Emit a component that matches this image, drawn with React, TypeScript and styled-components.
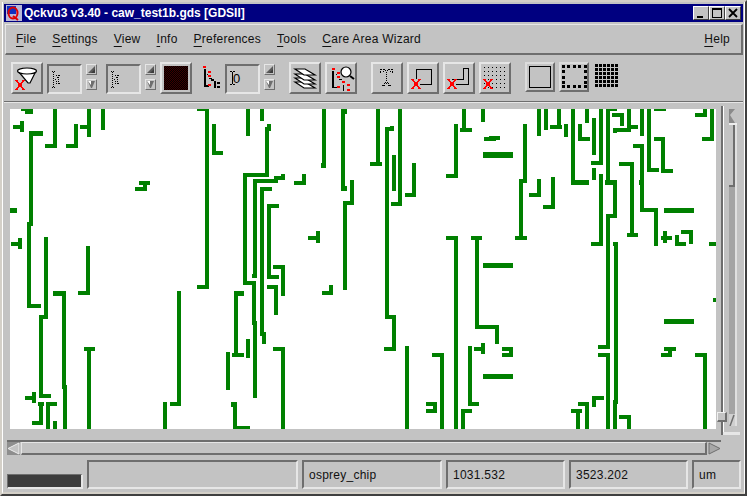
import * as React from "react";
import styled, { createGlobalStyle } from "styled-components";

const GlobalStyle = createGlobalStyle`
  html, body { margin: 0; padding: 0; background: #c3c3c3; }
  * { box-sizing: border-box; }
`;

const LIGHT = "#e6e6e6";
const DARK = "#6e6e6e";

const Win = styled.div`
  width: 747px;
  height: 496px;
  overflow: hidden;
  position: relative;
  background: #c3c3c3;
  border-style: solid;
  border-width: 2px;
  border-color: #d4d0c8 #404040 #404040 #d4d0c8;
  font-family: "Liberation Sans", Arial, sans-serif;
  font-size: 12px;
  color: #000;
`;

const Frame = styled.div`
  height: 100%;
  padding: 2px 1px 2px 1px;
  border-style: solid;
  border-width: 0 1px 2px 1px;
  border-color: #fff #fff #d4d0c8 #fff;
  display: flex;
  flex-direction: column;
`;

const TitleBar = styled.div`
  height: 18px;
  flex: none;
  background: #000080;
  display: flex;
  align-items: center;
  padding: 0 2px;
  color: #fff;
  font-weight: bold;
  font-size: 12px;
`;

const TitleText = styled.span`
  margin-left: 2px;
  flex: 1;
`;

const WinButton = styled.div`
  width: 16px;
  height: 14px;
  background: #c3c3c3;
  border-style: solid;
  border-width: 1px;
  border-color: #fff #404040 #404040 #fff;
  & svg { display: block; }
`;

const MenuBar = styled.div`
  height: 31px;
  flex: none;
  margin: 2px 0 0 1px;
  padding: 0 11px 0 10px;
  display: flex;
  align-items: center;
  gap: 16px;
  border-style: solid;
  border-width: 1px 2px 2px 1px;
  border-color: ${LIGHT} ${DARK} ${DARK} ${LIGHT};
`;

const MenuItem = styled.span<{ $right?: boolean }>`
  margin-left: ${({ $right }) => ($right ? "auto" : "0")};
  color: #111;
  letter-spacing: 0.25px;
  & u { text-underline-offset: 3px; }
`;

const ToolBar = styled.div`
  height: 47px;
  flex: none;
  padding: 7px 0 0 7px;
  display: flex;
  align-items: flex-start;
  border-bottom: 1px solid ${DARK};
  box-shadow: 0 1px 0 #e6e6e6;
`;

const ToolButton = styled.div<{ $ml?: number }>`
  width: 32px;
  height: 32px;
  flex: none;
  margin-left: ${({ $ml }) => $ml ?? 0}px;
  border-style: solid;
  border-width: 2px;
  border-color: ${LIGHT} ${DARK} ${DARK} ${LIGHT};
`;

const ModeButton = styled(ToolButton)`
  width: 30px;
  height: 30px;
  border-color: #dcdcdc ${DARK} ${DARK} #dcdcdc;
`;

const Field = styled.div<{ $ml?: number }>`
  width: 35px;
  height: 30px;
  flex: none;
  margin: 2px 0 0 ${({ $ml }) => $ml ?? 0}px;
  border-style: solid;
  border-width: 2px;
  border-color: ${DARK} ${LIGHT} ${LIGHT} ${DARK};
  position: relative;
`;

const FieldValue = styled.span`
  position: absolute;
  left: 6px;
  top: 6px;
  font-size: 13px;
  line-height: 14px;
`;

const SpinColumn = styled.div<{ $ml?: number }>`
  flex: none;
  margin: 2px 0 0 ${({ $ml }) => $ml ?? 0}px;
  display: flex;
  flex-direction: column;
  gap: 4px;
`;

const SpinButton = styled.div`
  width: 11px;
  height: 11px;
  background: #a8a8a8;
  border-style: solid;
  border-width: 1px;
  border-color: ${LIGHT} ${DARK} ${DARK} ${LIGHT};
  & svg { display: block; }
`;

const Swatch = styled(ToolButton)`
  padding: 2px;
`;

const SwatchFill = styled.div`
  width: 100%;
  height: 100%;
  background: repeating-conic-gradient(#000 0 25%, #3c0000 0 50%) 0 0 / 2px 2px;
`;

const Glyph = styled.svg<{ $ml?: number; $mt?: number }>`
  display: block;
  flex: none;
  margin-left: ${({ $ml }) => $ml ?? 0}px;
  margin-top: ${({ $mt }) => $mt ?? 0}px;
  shape-rendering: crispEdges;
`;

const Smooth = styled.g`
  shape-rendering: auto;
`;

const WorkArea = styled.div`
  height: 332px;
  flex: none;
  margin-top: 1px;
  padding-left: 6px;
  display: flex;
  align-items: flex-start;
  position: relative;
`;

const Canvas = styled.svg`
  display: block;
  flex: none;
  width: 706px;
  height: 320px;
  margin-top: 6px;
  background: #fff;
  shape-rendering: crispEdges;
`;

const VScroll = styled.div`
  width: 16px;
  height: 329px;
  flex: none;
  margin: 3px 0 0 5px;
  padding: 3px 0 0 6px;
  border-left: 2px solid ${DARK};
  box-shadow: inset 1px 0 0 #fff;
`;

const VArrow = styled.div`
  width: 8px;
  height: 16px;
  background: #c3c3c3;
  & svg { display: block; }
`;

const VTrough = styled.div`
  width: 8px;
  height: 301px;
  background: #a4a4a4;
  border-right: 2px solid #e0e0e0;
  display: flex;
  flex-direction: column;
  justify-content: space-between;
  & svg { display: block; }
`;

const VThumb = styled.div`
  width: 6px;
  height: 62px;
  background: #c3c3c3;
  border-style: solid;
  border-width: 0 2px 2px 0;
  border-color: ${DARK};
`;

const VFoot = styled.div`
  width: 17px;
  height: 3px;
  margin: 6px 0 0 -6px;
  background: #e6e6e6;
`;

const Grip = styled.div`
  position: absolute;
  left: 713px;
  top: 309px;
  width: 10px;
  height: 10px;
  background: #c3c3c3;
  border-style: solid;
  border-width: 1px 2px 2px 1px;
  border-color: #f0f0f0 ${DARK} ${DARK} #f0f0f0;
`;

const HScroll = styled.div`
  width: 714px;
  height: 15px;
  flex: none;
  margin: 5px 0 0 3px;
  display: flex;
  align-items: stretch;
  background: #c3c3c3;
  border-top: 2px solid ${DARK};
`;

const HArrow = styled.div`
  width: 13px;
  flex: none;
  & svg { display: block; }
`;

const HThumb = styled.div`
  flex: 1;
  margin: 0 1px;
  border-style: solid;
  border-width: 1px 2px 2px 1px;
  border-color: #e6e6e6 ${DARK} ${DARK} #e6e6e6;
`;

const StatusBar = styled.div`
  height: 29px;
  flex: none;
  margin-top: 5px;
  padding-left: 3px;
  display: flex;
  align-items: flex-end;
  gap: 4px;
`;

const Progress = styled.div`
  width: 76px;
  height: 15px;
  background: #3c3c3c;
  border-style: solid;
  border-width: 1px 2px 2px 1px;
  border-color: ${DARK} ${LIGHT} ${LIGHT} ${DARK};
`;

const StatusCell = styled.div<{ $w: number }>`
  width: ${({ $w }) => $w}px;
  height: 29px;
  padding-left: 5px;
  display: flex;
  align-items: center;
  border-style: solid;
  border-width: 2px;
  border-color: ${DARK} ${LIGHT} ${LIGHT} ${DARK};
  color: #111;
  letter-spacing: 0.25px;
`;

// layout geometry as [x1, y1, x2, y2], in window pixels
const geometry: number[][] = [
  [21,109,33,111],[25,109,33,114],[13,125,24,129],[20,121,24,132],[53,109,57,148],[45,144,57,148],
  [74,124,78,148],[66,144,78,148],[87,109,91,137],[80,125,91,129],[101,109,105,130],[29,131,33,226],
  [29,131,43,136],[27,222,31,308],[27,304,41,308],[10,208,17,213],[11,242,22,246],[18,238,22,249],
  [44,237,48,319],[39,315,48,319],[39,315,43,398],[39,394,51,398],[86,246,90,295],[78,291,90,295],
  [135,187,147,191],[139,181,150,185],[143,181,147,191],[205,109,209,289],[197,285,209,289],[197,109,209,111],
  [212,124,216,155],[212,151,223,155],[246,109,250,136],[260,109,264,121],[243,173,247,285],[243,173,269,177],
  [243,281,256,285],[265,127,269,177],[267,124,271,131],[252,281,256,325],[253,321,257,398],[253,179,257,274],
  [252,274,257,278],[253,179,278,183],[53,291,66,296],[62,291,66,389],[63,385,67,429],[84,347,95,351],
  [87,347,91,429],[177,291,181,406],[170,402,181,406],[163,402,167,429],[234,291,244,296],[234,291,238,357],
  [232,353,244,357],[246,339,250,358],[226,352,230,390],[231,402,237,407],[233,402,237,429],[233,426,250,429],
  [25,396,36,400],[32,392,36,403],[38,402,44,406],[39,402,43,425],[32,421,43,425],[46,402,57,406],
  [46,402,50,429],[53,421,57,429],[322,109,326,168],[321,163,326,168],[341,109,345,191],[343,109,347,114],
  [341,186,347,191],[376,109,380,166],[370,162,382,166],[398,109,402,206],[391,202,402,206],[385,127,389,319],
  [385,127,394,131],[390,126,394,131],[392,155,396,191],[412,163,416,197],[405,193,416,197],[462,109,466,132],
  [460,128,472,132],[481,109,485,122],[454,124,458,178],[446,174,458,178],[484,137,496,141],[489,136,500,140],
  [483,152,513,158],[483,263,513,268],[446,236,458,240],[454,236,458,429],[471,236,482,240],[475,236,479,329],
  [475,325,499,329],[495,325,499,344],[260,187,264,336],[260,187,272,191],[262,332,266,344],[267,204,271,279],
  [267,204,279,208],[267,275,279,279],[273,265,285,269],[281,265,285,296],[274,176,285,180],[281,174,285,180],
  [302,174,306,185],[294,181,306,185],[350,180,354,205],[343,201,354,205],[343,201,347,290],[308,236,320,240],
  [316,231,320,243],[267,285,278,289],[274,285,278,315],[329,285,333,295],[322,291,333,295],[385,315,396,319],
  [392,315,396,351],[384,347,396,351],[273,347,285,351],[281,347,285,429],[405,346,409,429],[432,353,444,357],
  [440,353,444,429],[426,402,437,406],[426,409,437,413],[433,402,437,413],[468,346,472,406],[468,402,479,406],
  [461,409,472,413],[461,409,465,429],[474,347,485,351],[481,343,485,354],[483,374,513,379],[537,109,541,136],
  [544,109,548,130],[557,109,561,129],[550,125,562,129],[564,124,568,137],[571,109,575,185],[571,180,589,185],
  [585,109,589,123],[578,124,582,141],[578,137,590,141],[592,118,596,155],[599,109,603,165],[591,161,603,165],
  [592,168,596,180],[606,109,610,185],[606,109,617,111],[605,180,617,185],[613,180,617,218],[606,214,617,218],
  [606,214,610,349],[598,345,610,349],[612,113,624,117],[620,113,624,126],[627,109,631,132],[613,128,631,132],
  [613,128,617,133],[627,125,638,129],[640,109,644,136],[647,109,651,172],[647,168,659,172],[654,109,666,111],
  [654,137,665,141],[661,137,665,173],[661,169,673,173],[633,144,644,148],[640,144,644,212],[639,180,644,185],
  [640,208,658,212],[654,208,658,246],[619,162,634,166],[630,162,634,237],[627,233,638,237],[599,174,603,246],
  [591,242,603,246],[523,124,527,183],[519,179,523,240],[519,179,527,183],[515,236,527,240],[537,179,541,197],
  [529,193,541,197],[551,177,555,209],[543,205,555,209],[664,208,694,213],[661,236,672,240],[663,231,667,243],
  [675,235,679,246],[675,242,686,246],[681,230,693,234],[689,230,693,244],[709,242,716,246],[710,109,714,141],
  [702,137,714,141],[695,113,707,117],[703,109,707,117],[613,242,617,246],[614,242,618,404],[613,400,617,429],
  [619,415,631,419],[627,415,631,429],[598,353,610,357],[606,353,610,429],[592,396,604,400],[592,396,596,407],
  [578,402,589,406],[585,402,589,429],[571,409,582,413],[576,409,580,429],[502,347,513,351],[502,353,513,357],
  [509,347,513,357],[664,319,694,324],[664,347,676,351],[661,353,672,357],[668,347,672,357],[695,353,707,357],
  [703,353,707,429],[713,298,716,302],
];

const RedX = ({ x, y }: { x: number; y: number }) => (
  <g stroke="#f00" strokeWidth="2" fill="none">
    <line x1={x} y1={y} x2={x + 8} y2={y + 10} />
    <line x1={x} y1={y + 10} x2={x + 8} y2={y} />
  </g>
);

const Px = ({ c, fill = "#000" }: { c: number[][]; fill?: string }) => (
  <g fill={fill}>
    {c.map(([x, y, w, h], i) => (
      <rect key={i} x={x} y={y} width={w} height={h} />
    ))}
  </g>
);

const dottedColumn = (x: number, y: number, n: number) =>
  Array.from({ length: n }, (_, i) => [x, y + i * 2, 1, 1]);

const AppIcon = () => (
  <Glyph width="16" height="16" viewBox="0 0 16 16">
    <rect width="16" height="16" fill="#b8b8d8" />
    <rect x="1" y="1" width="9" height="8" fill="#1030c0" />
    <Smooth>
      <ellipse cx="7" cy="8" rx="4.5" ry="5.5" fill="none" stroke="#e00000" strokeWidth="2" />
      <line x1="7" y1="11" x2="12" y2="15" stroke="#e00000" strokeWidth="2" />
    </Smooth>
  </Glyph>
);

const DottedCursor = () => (
  <Glyph width="31" height="26" viewBox="0 0 31 26">
    <Px c={[
      [3, 5, 1, 1], [5, 5, 1, 1], [3, 21, 1, 1], [5, 21, 1, 1],
      ...dottedColumn(4, 6, 8),
      ...dottedColumn(9, 9, 5),
      [7, 9, 1, 1], [8, 11, 1, 1], [6, 13, 1, 1], [7, 15, 1, 1], [10, 9, 1, 1], [10, 17, 1, 1], [7, 17, 1, 1],
    ]} />
  </Glyph>
);

const HierarchyLines = () => (
  <>
    <Px c={[[1, 3, 2, 17], [1, 19, 5, 2], [6, 12, 3, 1], [8, 13, 3, 2], [11, 15, 2, 7], [14, 16, 3, 2], [14, 20, 3, 2], [4, 8, 1, 1]]} />
    <Px fill="#f00" c={[[0, 0, 3, 2], [5, 5, 3, 2], [5, 9, 3, 2], [5, 18, 3, 2]]} />
  </>
);

const ToolFunnel = () => (
  <Glyph width="28" height="28" viewBox="13 64 28 28">
    <Smooth stroke="#000" fill="#fff" strokeWidth="1.2">
      <path d="M18 71 L28 83 L30 83 L36 71" />
      <ellipse cx="27" cy="71" rx="9.5" ry="3" />
    </Smooth>
    <RedX x={16} y={80} />
  </Glyph>
);

const layerOffsets = [13, 9, 5, 0];

const ToolLayers = () => (
  <Glyph width="28" height="28" viewBox="291 64 28 28">
    <Smooth stroke="#000" fill="#fff" strokeWidth="1.2">
      {layerOffsets.map((o) => (
        <path key={o} d={`M295 ${69 + o} H305 L315 ${75 + o} H304 Z`} />
      ))}
    </Smooth>
  </Glyph>
);

const ToolHierarchySearch = () => (
  <Glyph width="28" height="28" viewBox="327 64 28 28">
    <Px c={[[332, 71, 2, 17], [332, 87, 5, 1], [339, 79, 3, 1], [343, 85, 1, 6], [336, 74, 1, 1]]} />
    <Px fill="#f00" c={[[332, 68, 3, 2], [337, 72, 3, 2], [337, 76, 3, 2], [337, 86, 3, 2], [342, 81, 3, 2], [347, 84, 3, 2], [347, 89, 3, 2]]} />
    <Smooth stroke="#000" fill="#fff">
      <circle cx="346" cy="72" r="5" strokeWidth="1.2" />
      <line x1="350" y1="76" x2="354" y2="79" strokeWidth="2" />
    </Smooth>
  </Glyph>
);

const ToolText = () => (
  <Glyph width="28" height="28" viewBox="373 64 28 28">
    <Px c={[
      [380, 69, 2, 1], [383, 69, 2, 1], [388, 69, 2, 1], [391, 69, 2, 1], [380, 71, 1, 2], [383, 71, 1, 1], [390, 71, 1, 1], [392, 71, 1, 2],
      [385, 70, 1, 1], [387, 70, 1, 1], [386, 72, 1, 1], ...dottedColumn(386, 74, 4), [385, 82, 1, 1], [387, 82, 1, 1], [384, 83, 1, 1], [388, 83, 1, 1],
      [382, 85, 3, 1], [388, 85, 3, 1], [386, 83, 1, 1],
    ]} />
  </Glyph>
);

const ToolBox = () => (
  <Glyph width="28" height="28" viewBox="409 64 28 28">
    <path d="M416.5 79 V69.5 H431.5 V84.5 H420" fill="none" stroke="#000" />
    <RedX x={412} y={79} />
  </Glyph>
);

const ToolPath = () => (
  <Glyph width="28" height="28" viewBox="445 64 28 28">
    <path d="M452 79.5 H463.5 V68.5 H468.5 V84.5 H456" fill="none" stroke="#000" />
    <RedX x={448} y={79} />
  </Glyph>
);

const ToolDots = () => {
  const dots: number[][] = [];
  for (let r = 0; r < 6; r++) for (let c = 0; c < 6; c++) dots.push([484 + c * 4, 67 + r * 4, 1, 1]);
  return (
    <Glyph width="28" height="28" viewBox="481 64 28 28">
      <Px c={dots} />
      <RedX x={484} y={79} />
    </Glyph>
  );
};

const ModeSolid = () => (
  <Glyph width="26" height="26" viewBox="527 64 26 26">
    <rect x="529.5" y="66.5" width="21" height="21" fill="none" stroke="#000" />
  </Glyph>
);

const ModeOutline = () => {
  const dots: number[][] = [];
  const at = [0, 5, 11, 16, 22];
  at.forEach((p) => {
    dots.push([562 + p, 65, 3, 3], [562 + p, 85, 3, 3]);
    if (p > 0 && p < 22) dots.push([562, 65 + p, 3, 3], [584, 65 + p, 3, 3]);
  });
  return (
    <Glyph width="26" height="26" viewBox="561 64 26 26">
      <Px c={dots} />
    </Glyph>
  );
};

const ModeGrid = () => {
  const dots: number[][] = [];
  for (let r = 0; r < 6; r++) for (let c = 0; c < 6; c++) dots.push([c * 4, r * 4, 3, 3]);
  return (
    <Glyph width="23" height="23" viewBox="0 0 23 23" $ml={6} $mt={2}>
      <Px c={dots} />
    </Glyph>
  );
};

const SpinUp = () => (
  <SpinButton>
    <svg width="9" height="9" viewBox="0 0 9 9">
      <rect width="9" height="9" fill="#c3c3c3" />
      <path d="M1 8 H8 V1 Z" fill="#5a5a5a" />
      <path d="M4 8 H8 V4 Z" fill="#3c3c3c" />
    </svg>
  </SpinButton>
);

const SpinDown = () => (
  <SpinButton>
    <svg width="9" height="9" viewBox="0 0 9 9">
      <rect width="9" height="9" fill="#c3c3c3" />
      <path d="M1 1 H8 L5 8 H4 Z" fill="#6e6e6e" />
      <path d="M1 1 H4 L4 5 Z" fill="#fff" />
    </svg>
  </SpinButton>
);

const Spinner = ({ ml }: { ml: number }) => (
  <SpinColumn $ml={ml}>
    <SpinUp />
    <SpinDown />
  </SpinColumn>
);

export default function App() {
  return (
    <>
      <GlobalStyle />
      <Win>
        <Frame>
          <TitleBar>
            <AppIcon />
            <TitleText>Qckvu3 v3.40 - caw_test1b.gds [GDSII]</TitleText>
            <WinButton>
              <svg width="14" height="12" viewBox="0 0 14 12">
                <rect x="3" y="9" width="6" height="2" fill="#000" />
              </svg>
            </WinButton>
            <WinButton>
              <svg width="14" height="12" viewBox="0 0 14 12" shapeRendering="crispEdges">
                <path d="M2.5 2.5 H11.5 V10.5 H2.5 Z" fill="none" stroke="#000" />
                <rect x="2" y="1" width="10" height="2" fill="#000" />
              </svg>
            </WinButton>
            <WinButton>
              <svg width="14" height="12" viewBox="0 0 14 12">
                <path d="M3 2 L11 10 M11 2 L3 10" stroke="#000" strokeWidth="1.8" />
              </svg>
            </WinButton>
          </TitleBar>

          <MenuBar>
            <MenuItem><u>F</u>ile</MenuItem>
            <MenuItem><u>S</u>ettings</MenuItem>
            <MenuItem><u>V</u>iew</MenuItem>
            <MenuItem><u>I</u>nfo</MenuItem>
            <MenuItem><u>P</u>references</MenuItem>
            <MenuItem><u>T</u>ools</MenuItem>
            <MenuItem><u>C</u>are Area Wizard</MenuItem>
            <MenuItem $right><u>H</u>elp</MenuItem>
          </MenuBar>

          <ToolBar>
            <ToolButton><ToolFunnel /></ToolButton>
            <Field $ml={4}><DottedCursor /></Field>
            <Spinner ml={4} />
            <Field $ml={9}><DottedCursor /></Field>
            <Spinner ml={4} />
            <Swatch $ml={4}><SwatchFill /></Swatch>
            <Glyph width="22" height="24" viewBox="0 0 22 24" $ml={11} $mt={4}>
              <HierarchyLines />
            </Glyph>
            <Field $ml={0}>
              <Glyph width="8" height="16" viewBox="0 0 8 16" $ml={2} $mt={5}>
                <Px c={[[1, 0, 2, 1], [4, 0, 2, 1], [3, 1, 1, 12], [1, 13, 2, 1], [4, 13, 2, 1]]} />
              </Glyph>
              <FieldValue>0</FieldValue>
            </Field>
            <Spinner ml={4} />
            <ToolButton $ml={14}><ToolLayers /></ToolButton>
            <ToolButton $ml={4}><ToolHierarchySearch /></ToolButton>
            <ToolButton $ml={14}><ToolText /></ToolButton>
            <ToolButton $ml={4}><ToolBox /></ToolButton>
            <ToolButton $ml={4}><ToolPath /></ToolButton>
            <ToolButton $ml={4}><ToolDots /></ToolButton>
            <ModeButton $ml={14}><ModeSolid /></ModeButton>
            <ModeButton $ml={4}><ModeOutline /></ModeButton>
            <ModeGrid />
          </ToolBar>

          <WorkArea>
            <Canvas viewBox="10 109 706 320">
              <g fill="#008000">
                {geometry.map(([x1, y1, x2, y2], i) => (
                  <rect key={i} x={x1} y={y1} width={x2 - x1} height={y2 - y1} />
                ))}
              </g>
            </Canvas>
            <VScroll>
              <VArrow>
                <svg width="8" height="16" viewBox="0 0 8 16">
                  <path d="M0 0 H6 L1 6 L6 14 H0 Z" fill="#8a8a8a" />
                  <rect x="0" y="14" width="8" height="2" fill="#eee" />
                </svg>
              </VArrow>
              <VTrough>
                <VThumb />
                <svg width="6" height="12" viewBox="0 0 6 12">
                  <rect width="6" height="12" fill="#d0d0d0" />
                  <path d="M1 12 L5 1" stroke="#6e6e6e" strokeWidth="1.5" />
                </svg>
              </VTrough>
              <VFoot />
            </VScroll>
            <Grip />
          </WorkArea>

          <HScroll>
            <HArrow>
              <svg width="13" height="13" viewBox="0 0 13 13">
                <rect width="13" height="13" fill="#8e8e8e" />
                <path d="M1 6.5 L12 1 V12 Z" fill="#c3c3c3" stroke="#eee" />
              </svg>
            </HArrow>
            <HThumb />
            <HArrow>
              <svg width="13" height="13" viewBox="0 0 13 13">
                <rect width="13" height="13" fill="#c3c3c3" />
                <path d="M12 6.5 L1 1 V12 Z" fill="#a8a8a8" stroke="#6e6e6e" />
              </svg>
            </HArrow>
          </HScroll>

          <StatusBar>
            <Progress />
            <StatusCell $w={211} />
            <StatusCell $w={140}>osprey_chip</StatusCell>
            <StatusCell $w={119}>1031.532</StatusCell>
            <StatusCell $w={119}>3523.202</StatusCell>
            <StatusCell $w={49}>um</StatusCell>
          </StatusBar>
        </Frame>
      </Win>
    </>
  );
}
